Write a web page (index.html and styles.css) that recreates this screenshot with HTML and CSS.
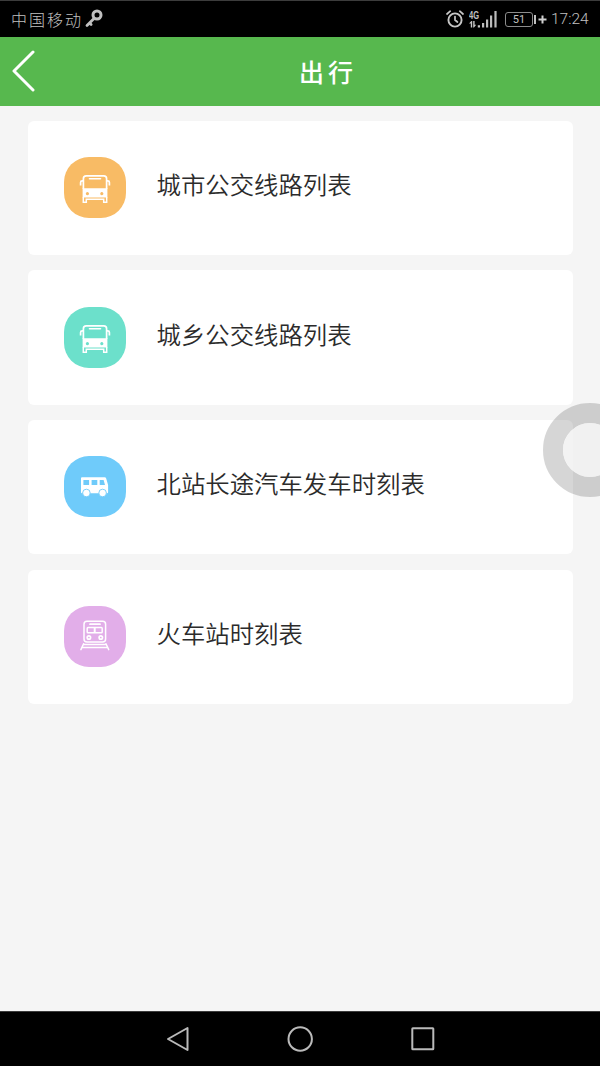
FILE: index.html
```html
<!DOCTYPE html>
<html lang="zh-CN">

<head>
  <meta charset="UTF-8" />
  <meta name="viewport" content="width=device-width, initial-scale=1.0" />
  <title>出行</title>
  <link rel="stylesheet" href="styles.css">
</head>

<body>
  <div class="phone">
    <div class="status">
      <span class="carrier">中国移动</span>
      <svg class="key" width="18" height="20" viewBox="0 0 18 20">
        <circle cx="12" cy="6" r="4" fill="none" stroke="#c0c0c0" stroke-width="3" />
        <path d="M9 9.5L2 16.5M4.5 14l1.6 1.6" fill="none" stroke="#c0c0c0" stroke-width="2.8" stroke-linecap="round" />
      </svg>
      <div class="status-right">
        <svg class="alarm" width="18" height="18" viewBox="0 0 18 18" fill="none" stroke="#c6c6c6" stroke-linecap="round">
          <circle cx="9" cy="10" r="6.6" stroke-width="1.9" />
          <path d="M9 6.5V10l2.4 2M1 4l3.2-2.8M17 4l-3.2-2.8" stroke-width="1.7" />
        </svg>
        <div class="net">
          <span>4G</span>
          <svg width="11" height="7" viewBox="0 0 11 7" fill="#c6c6c6">
            <path d="M0 2.6L2.4 0h.8v6.4H1.8V2.6zM4.2 0h1.4v3.8h1.6L5 6.6h-.8zM8.8 4.3H11v2.3H8.8z" />
          </svg>
        </div>
        <svg class="bars" width="16" height="18" viewBox="0 0 16 18" fill="#bcbcbc">
          <path d="M0 13h2.2v4.5H0zM4 9.5h2.2v8H4zM8 5.5h2.2v12H8zM12.4 1h2.2v16.5h-2.2z" />
        </svg>
        <span class="battery">51</span>
        <i class="cap"></i>
        <svg class="plus" width="9" height="9" viewBox="0 0 9 9">
          <path d="M4.5 .5v8M.5 4.5h8" stroke="#d0d0d0" stroke-width="2" />
        </svg>
        <span class="time">17:24</span>
      </div>
    </div>

    <div class="header">
      <svg class="back" width="24" height="42" viewBox="0 0 24 42">
        <path d="M21 2.5L2 21.5l19 19" transform="translate(0 -.5)" fill="none" stroke="#fff" stroke-width="3" stroke-linecap="round" stroke-linejoin="round" />
      </svg>
      <h1>出行</h1>
    </div>

    <ul class="list">
      <li>
        <div class="icon orange">
          <svg viewBox="0 0 61 61">
            <use href="#bus" />
          </svg>
        </div>
        <span>城市公交线路列表</span>
      </li>
      <li>
        <div class="icon green">
          <svg viewBox="0 0 61 61">
            <use href="#bus" />
          </svg>
        </div>
        <span>城乡公交线路列表</span>
      </li>
      <li>
        <div class="icon blue">
          <svg viewBox="0 0 61 61">
            <path fill="#fff" fill-rule="evenodd" d="M18 21.3h22.6q1.2 0 1.6 1.2l1.9 6.5v7.2q0 1-1 1h-25.1q-1 0-1-1v-13.9q0-1 1-1zM19.4 24v5h5.7v-5zM27.6 24v5h5.7v-5zM35.7 24v5H41l-1.4-5z" />
            <g fill="#fff" stroke="#6fcbfa" stroke-width=".9">
              <circle cx="22.4" cy="37" r="3.8" />
              <circle cx="38.6" cy="37" r="3.8" />
            </g>
          </svg>
        </div>
        <span>北站长途汽车发车时刻表</span>
      </li>
      <li>
        <div class="icon purple">
          <svg viewBox="0 0 61 61" fill="none" stroke="#fff" stroke-width="1.5">
            <rect x="20" y="15.2" width="21.6" height="20.8" rx="3" />
            <path d="M26 18.2h10" stroke-width="1.8" stroke-linecap="round" />
            <rect x="23.2" y="21.6" width="15" height="5.2" rx=".8" />
            <path d="M30.7 21.4v5.4" stroke-width="2" />
            <circle cx="24.9" cy="31.5" r="1.7" stroke-width="1.7" />
            <circle cx="36.8" cy="31.5" r="1.7" stroke-width="1.7" />
            <path d="M19.6 37.8l-2.7 5.8M42 37.8l2.7 5.8M19.6 38.6H42M18.4 41.4h24.8" stroke-linecap="round" />
          </svg>
        </div>
        <span>火车站时刻表</span>
      </li>
    </ul>

    <div class="nav">
      <svg width="24" height="28" viewBox="0 0 24 28">
        <path d="M21.5 3v22L2 14z" />
      </svg>
      <svg width="28" height="28" viewBox="0 0 28 28">
        <circle cx="13.2" cy="14" r="11.7" />
      </svg>
      <svg width="24" height="28" viewBox="0 0 24 28">
        <rect x="1.3" y="3.3" width="21" height="21" rx=".5" />
      </svg>
    </div>

    <!-- 悬浮球 -->
    <div class="float-ball"></div>
  </div>

  <svg class="defs">
    <symbol id="bus" viewBox="0 0 61 61">
      <path fill="none" stroke="#fff" stroke-width="1.7" d="M19.4 32V21.7q0-2.8 2.8-2.8h17.6q2.8 0 2.8 2.8V32M19.5 23.8h-1.3q-1.6 0-1.6 1.6v3.2M42.5 23.8h1.3q1.6 0 1.6 1.6v3.2" />
      <path d="M25.5 21.7h11" stroke="#fff" stroke-width="1.6" stroke-linecap="round" />
      <path fill="#fff" fill-rule="evenodd" d="M18.6 31.3h24.8v9.2H18.6zM23.4 35.1a1.6 1.6 0 1 0 .01 0zM37.8 35.1a1.6 1.6 0 1 0 .01 0z" />
      <path fill="none" stroke="#fff" stroke-width="1.5" d="M19.3 40v5.2h3V42.2h17.4v3h3V40" />
    </symbol>
  </svg>
</body>

</html>
```
FILE: styles.css
```css
* {
  margin: 0;
  padding: 0;
  box-sizing: border-box;
}

body {
  font-family: "Noto Sans CJK SC", sans-serif;
  background: #f5f5f5;
}

.phone {
  position: relative;
  display: flex;
  flex-direction: column;
  width: 600px;
  height: 1066px;
  overflow: hidden;
}

.status {
  display: flex;
  align-items: center;
  height: 37px;
  padding: 0 12px 0 11px;
  border-top: 1px solid #3c3c3c;
  background: #000;
  color: #c0c0c0;
}

.carrier {
  font-size: 16px;
  font-weight: 300;
  line-height: 24px;
  letter-spacing: 2px;
  padding-bottom: 1px;
}

.key {
  margin-left: 2px;
}

.status-right {
  display: flex;
  align-items: center;
  margin-left: auto;
}

.net {
  display: flex;
  flex-direction: column;
  width: 12px;
  margin-left: 5px;
}

.net span {
  font: bold 10px/11px "Liberation Sans", sans-serif;
  transform: scaleX(.75);
  transform-origin: left;
}

.bars {
  margin-left: 1px;
}

.battery {
  width: 28px;
  height: 15px;
  margin-left: 7px;
  border: 1px solid #8c8c8c;
  border-radius: 3px;
  font: 11px/13px Roboto, sans-serif;
  text-align: center;
}

.cap {
  width: 2px;
  height: 9px;
  margin-left: 1px;
  background: #c0c0c0;
}

.plus {
  margin-left: 2px;
}

.time {
  width: 37px;
  margin-left: 4px;
  font: 300 15.5px/20px Roboto, sans-serif;
  white-space: nowrap;
}

.header {
  display: grid;
  grid-template-columns: 52px 1fr;
  align-items: center;
  height: 68.5px;
  padding-left: 12px;
  background: #57b84e;
}

.header h1 {
  color: #fff;
  font-size: 25px;
  font-weight: 500;
  line-height: 36px;
  letter-spacing: 4px;
  text-align: center;
  padding-right: 8px;
}

.list {
  flex: 1;
  display: flex;
  flex-direction: column;
  gap: 15.2px;
  padding: 15px 27px 0 27.5px;
  list-style: none;
}

.list li {
  display: flex;
  height: 134.5px;
  padding: 36.5px 36.5px 0;
  border-radius: 6px;
  background: #fff;
}

.list span {
  margin-left: 31px;
  padding-top: 9px;
  color: #2b2b2b;
  font-size: 24.4px;
  font-weight: 350;
  line-height: 36px;
}

.icon {
  width: 61.5px;
  height: 61px;
  border-radius: 25px;
}

.icon svg {
  display: block;
  width: 61px;
  height: 61px;
}

.orange {
  background: #f8bb65;
}

.green {
  background: #6ce0cb;
}

.blue {
  background: #6fcbfa;
}

.purple {
  background: #e2aee9;
}

.nav {
  display: flex;
  justify-content: space-between;
  align-items: center;
  height: 55px;
  padding: 0 165px 0 166px;
  border-top: 1px solid #3c3c3c;
  background: #000;
}

.nav svg {
  fill: none;
  stroke: #bababa;
  stroke-width: 2;
  stroke-linejoin: round;
}

/* 悬浮球盖在列表上面 */
.float-ball {
  position: absolute;
  top: 403px;
  left: 543px;
  width: 94px;
  height: 94px;
  border: 20px solid rgba(0, 0, 0, .16);
  border-radius: 50%;
}

.float-ball::before {
  content: "";
  display: block;
  height: 100%;
  border-radius: 50%;
  background: rgba(240, 240, 240, .8);
}

.defs {
  display: none;
}
```
